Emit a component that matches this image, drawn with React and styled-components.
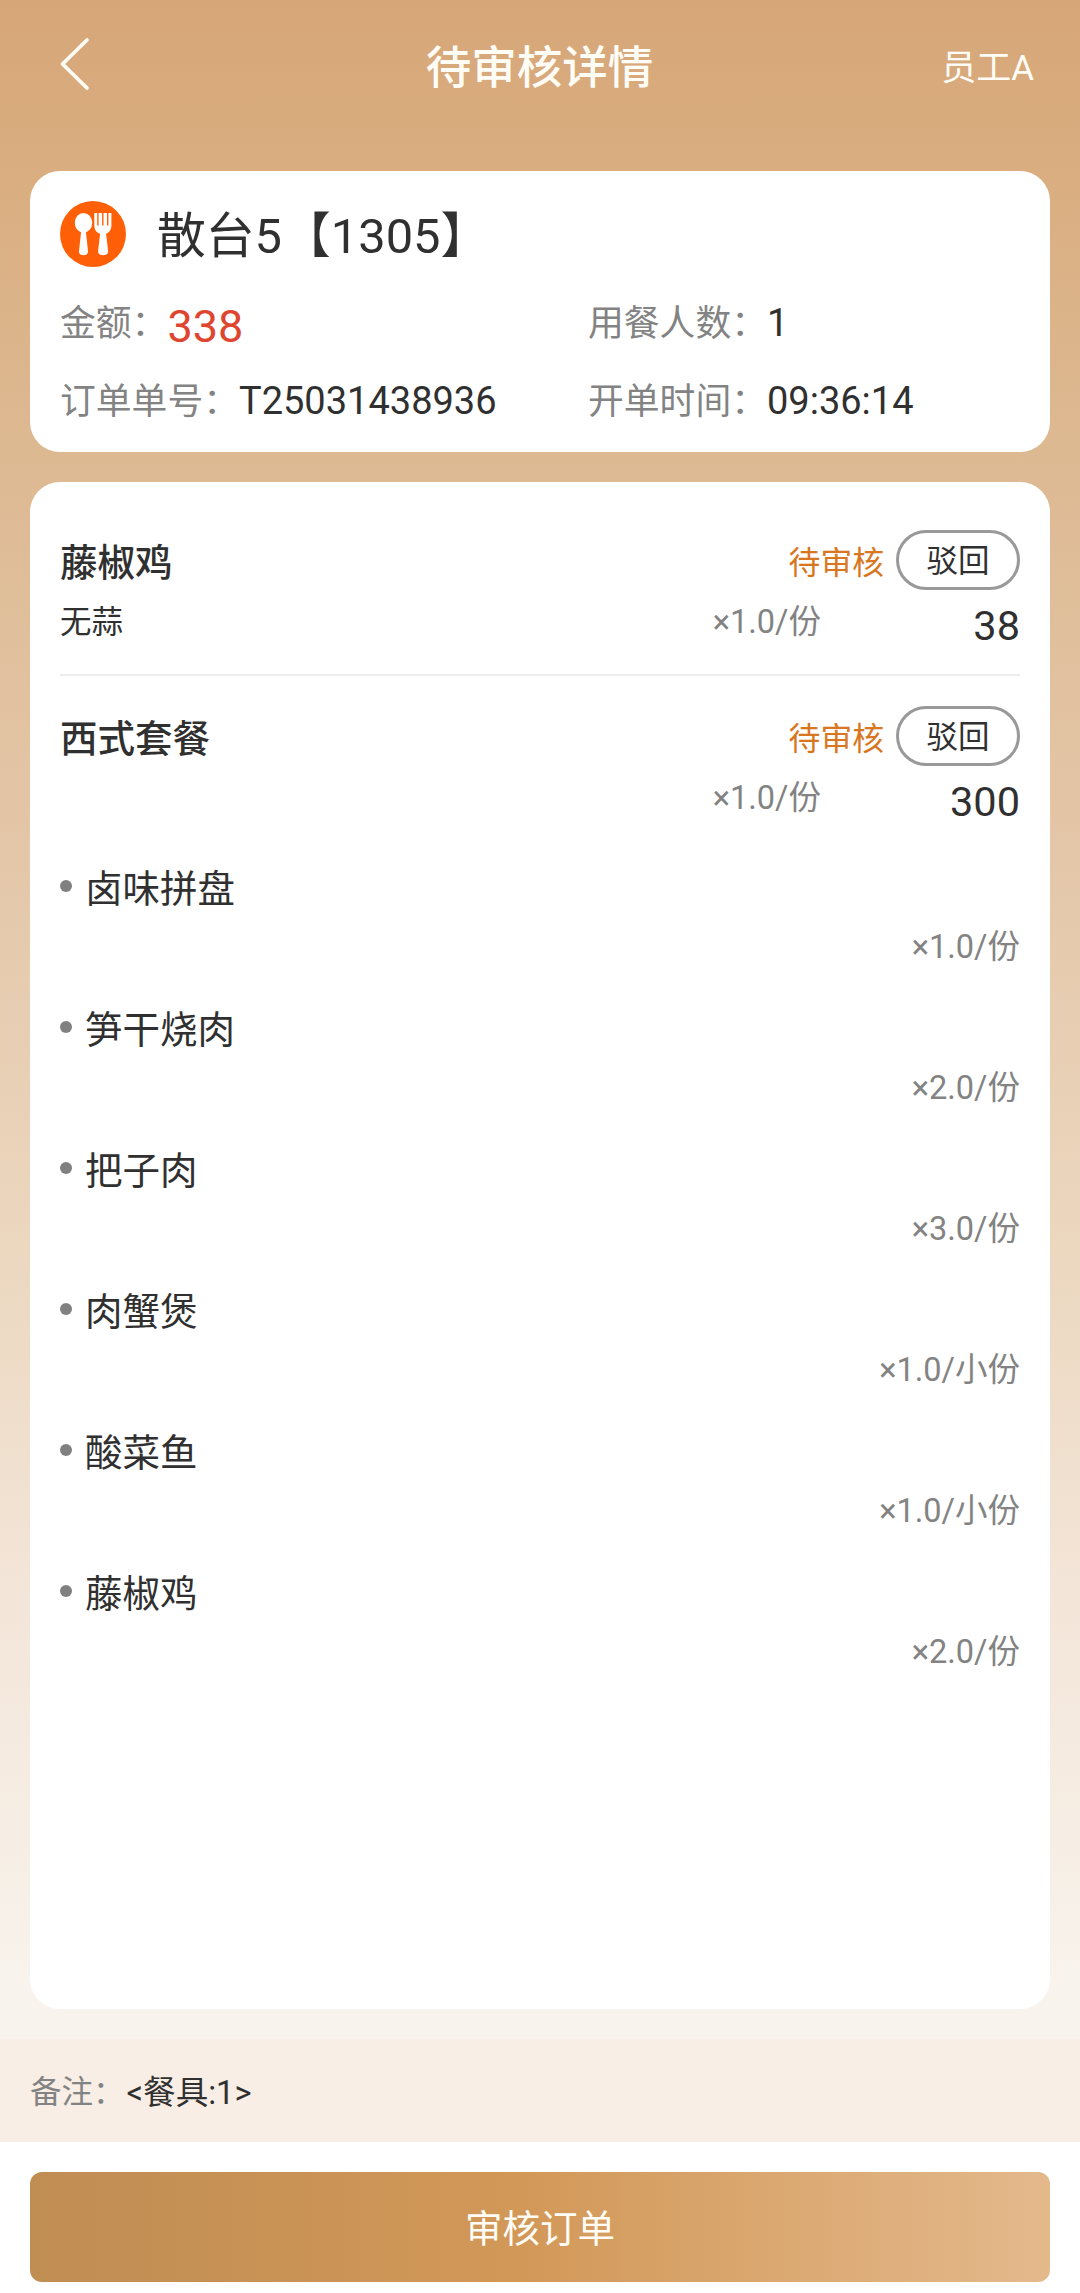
import React from "react";
import styled, { createGlobalStyle } from "styled-components";

const GlobalStyle = createGlobalStyle`
  * { box-sizing: border-box; }
  html, body { margin: 0; padding: 0; }
  body {
    font-family: Roboto, "Noto Sans CJK SC", sans-serif;
    color: #303030;
    background: #fff;
  }
  button { font-family: inherit; padding: 0; margin: 0; cursor: pointer; }
`;

const Page = styled.div`
  width: 1080px;
  height: 2293px;
  display: flex;
  flex-direction: column;
  overflow: hidden;
  background: #fff;
`;

const Backdrop = styled.div`
  height: 2039px;
  padding: 0 30px 30px;
  display: flex;
  flex-direction: column;
  background: linear-gradient(180deg, #d6a678 0%, #daaf82 10%, #ddb992 22%, #e5c9ac 45%, #ecd8c0 62%, #f3e5d8 78%, #f8f3ec 97%, #f8f3ec 100%);
`;

const NavBar = styled.header`
  height: 171px;
  padding: 0 16px 39px 29px;
  display: grid;
  grid-template-columns: 200px 1fr 200px;
  align-items: center;
  color: #fffdf6;
`;

const BackButton = styled.button`
  width: 34px;
  height: 58px;
  padding-bottom: 4px;
  display: flex;
  border: 0;
  background: none;
  color: inherit;
`;

const NavTitle = styled.h1`
  margin: 0;
  padding: 6px 14px 0 0;
  text-align: center;
  font-size: 45.5px;
  line-height: 60px;
  font-weight: 500;
`;

const NavUser = styled.span`
  padding-top: 5px;
  text-align: right;
  font-size: 35px;
  line-height: 44px;
`;

const Cards = styled.div`
  flex: 1;
  display: flex;
  flex-direction: column;
  gap: 30px;
`;

const Card = styled.section`
  flex: ${(p) => (p.$grow ? "1" : "none")};
  height: ${(p) => (p.$height ? `${p.$height}px` : "auto")};
  padding: ${(p) => p.$padding};
  border-radius: 30px;
  background: #fff;
`;

const TableRow = styled.div`
  height: 66px;
  display: flex;
  align-items: center;
  gap: 31px;
`;

const TableName = styled.h2`
  margin: 0;
  padding-top: 5px;
  font-size: 48.8px;
  line-height: 60px;
  font-weight: 400;
`;

const InfoGrid = styled.div`
  margin-top: 15px;
  display: grid;
  grid-template-columns: 528px 1fr;
  grid-auto-rows: 78px;
`;

const InfoCell = styled.div`
  display: flex;
  align-items: center;
`;

const Label = styled.span`
  padding-top: 5px;
  color: #838383;
  font-size: ${(p) => p.$size || 35.8}px;
  line-height: 50px;
`;

const Value = styled.span`
  font-size: ${(p) => p.$size || 38}px;
  line-height: 50px;
  color: ${(p) => p.$color || "inherit"};
  padding-top: ${(p) => p.$drop || 4}px;
  padding-left: ${(p) => p.$indent || 0}px;
`;

const Dish = styled.article`
  height: ${(p) => (p.$divided ? "176px" : "180px")};
  border-bottom: ${(p) => (p.$divided ? "2px solid #ececec" : "0")};
  padding-top: 30px;
`;

const DishHead = styled.div`
  height: 60px;
  display: flex;
  align-items: center;
`;

const DishName = styled.h3`
  margin: 0;
  padding-top: 6px;
  flex: 1;
  font-size: 37.5px;
  line-height: 54px;
  font-weight: 500;
`;

const Status = styled.span`
  margin-right: 12px;
  padding-top: 5px;
  color: #d8771f;
  font-size: 31.8px;
  line-height: 54px;
`;

const RejectButton = styled.button`
  width: 124px;
  height: 60px;
  padding-top: 3px;
  border: 3px solid #999;
  border-radius: 30px;
  background: #fff;
  color: #303030;
  font-size: 31.5px;
  line-height: 51px;
`;

const DishMeta = styled.div`
  height: 62px;
  display: grid;
  grid-template-columns: 1fr 200px 199px;
  align-items: center;
`;

const Note = styled.span`
  padding-top: 4px;
  font-size: 31.5px;
  line-height: 56px;
`;

const Quantity = styled.span`
  padding-top: 3px;
  color: #838383;
  font-size: 32.5px;
  line-height: 57px;
  text-align: right;
`;

const Price = styled.span`
  padding-top: 10px;
  font-size: 41.5px;
  line-height: 52px;
  text-align: right;
`;

const ComboList = styled.ul`
  margin: 0;
  padding: 0;
  list-style: none;
`;

const ComboItem = styled.li`
  height: 141px;
  display: flex;
  flex-direction: column;
`;

const ComboName = styled.div`
  height: 60px;
  display: flex;
  align-items: center;
  gap: 13px;
`;

const ComboText = styled.span`
  padding-top: 5px;
  font-size: 37.5px;
  line-height: 54px;
`;

const Dot = styled.i`
  width: 12px;
  height: 12px;
  border-radius: 50%;
  background: #808080;
`;

const RemarkBar = styled.div`
  height: 103px;
  padding: 0 30px;
  display: flex;
  align-items: center;
  background: #f8eee5;
`;

const Footer = styled.footer`
  padding: 30px 30px 11px;
`;

const SubmitButton = styled.button`
  width: 100%;
  height: 110px;
  padding-top: 5px;
  border: 0;
  border-radius: 12px;
  color: #fffdf6;
  font-size: 37.5px;
  line-height: 105px;
  background: linear-gradient(90deg, #c08d53 0%, #d29858 48%, #e4b98c 100%);
`;

const combo = [
  ["卤味拼盘", "×1.0/份"],
  ["笋干烧肉", "×2.0/份"],
  ["把子肉", "×3.0/份"],
  ["肉蟹煲", "×1.0/小份"],
  ["酸菜鱼", "×1.0/小份"],
  ["藤椒鸡", "×2.0/份"],
];

const dishes = [
  { name: "藤椒鸡", note: "无蒜", qty: "×1.0/份", price: "38" },
  { name: "西式套餐", note: "", qty: "×1.0/份", price: "300" },
];

function BackIcon() {
  return (
    <svg width="34" height="54" viewBox="0 0 34 54" fill="none" stroke="currentColor" strokeWidth="3.8" strokeLinecap="round" strokeLinejoin="round">
      <path d="M28 3 3.500 27 28 51" />
    </svg>
  );
}

function DiningIcon() {
  return (
    <svg width="66" height="66" viewBox="0 0 66 66">
      <circle cx="33" cy="33" r="33" fill="#ff5f06" />
      <g fill="#fff">
        <ellipse cx="23.500" cy="21.800" rx="8.700" ry="9.900" />
        <path d="M21.300 29h4.400l2.300 21c.3 2.800-1.700 4.200-4.500 4.200s-4.800-1.400-4.500-4.200z" />
        <path d="M34.300 12h2.900v12.500h1.400V12h3.500v12.500h1.400V12H47v12.500h1.400V12h3v12.500c0 4.200-2 7-5.300 8.200l2 17.300c.3 2.800-1.900 4.200-5 4.200s-5.300-1.400-5-4.200l2-17.300c-3.700-1.200-5.800-4-5.800-8.200z" />
      </g>
    </svg>
  );
}

export default function App() {
  return (
    <Page>
      <GlobalStyle />
      <Backdrop>
        <NavBar>
          <BackButton aria-label="返回">
            <BackIcon />
          </BackButton>
          <NavTitle>待审核详情</NavTitle>
          <NavUser>员工A</NavUser>
        </NavBar>

        <Cards>
          <Card $height={281} $padding="30px">
            <TableRow>
              <DiningIcon />
              <TableName>散台5【1305】</TableName>
            </TableRow>
            <InfoGrid>
              <InfoCell>
                <Label>金额：</Label>
                <Value $size={45} $color="#de4630" $drop={12}>338</Value>
              </InfoCell>
              <InfoCell>
                <Label>用餐人数：</Label>
                <Value>1</Value>
              </InfoCell>
              <InfoCell>
                <Label>订单单号：</Label>
                <Value>T25031438936</Value>
              </InfoCell>
              <InfoCell>
                <Label>开单时间：</Label>
                <Value>09:36:14</Value>
              </InfoCell>
            </InfoGrid>
          </Card>

          <Card $grow $padding="18px 30px 0">
            {dishes.map((dish, i) => (
              <Dish key={dish.name} $divided={i < dishes.length - 1}>
                <DishHead>
                  <DishName>{dish.name}</DishName>
                  <Status>待审核</Status>
                  <RejectButton>驳回</RejectButton>
                </DishHead>
                <DishMeta>
                  <Note>{dish.note}</Note>
                  <Quantity>{dish.qty}</Quantity>
                  <Price>{dish.price}</Price>
                </DishMeta>
              </Dish>
            ))}
            <ComboList>
              {combo.map(([name, qty]) => (
                <ComboItem key={name}>
                  <ComboName>
                    <Dot />
                    <ComboText>{name}</ComboText>
                  </ComboName>
                  <Quantity>{qty}</Quantity>
                </ComboItem>
              ))}
            </ComboList>
          </Card>
        </Cards>
      </Backdrop>

      <RemarkBar>
        <Label $size={31.5}>备注：</Label>
        <Value $size={32.6} $indent={2}>&lt;餐具:1&gt;</Value>
      </RemarkBar>
      <Footer>
        <SubmitButton>审核订单</SubmitButton>
      </Footer>
    </Page>
  );
}
